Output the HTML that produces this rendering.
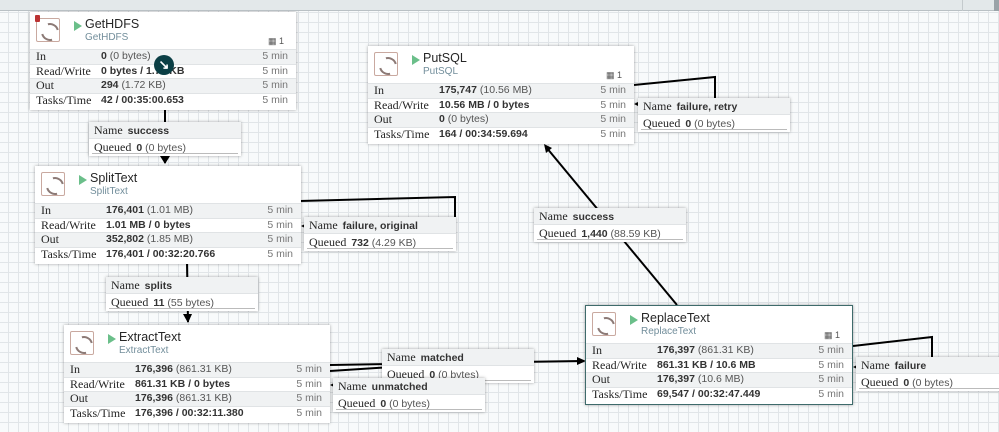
<!DOCTYPE html>
<html><head><meta charset="utf-8"><style>
*{margin:0;padding:0;box-sizing:border-box}
body{width:999px;height:432px;overflow:hidden;position:relative;background-color:#f8fafb;
background-image:linear-gradient(#e1e5e8 1px,transparent 1px),linear-gradient(90deg,#e1e5e8 1px,transparent 1px);
background-size:10px 10px;background-position:0 2px,8px 0;font-family:"Liberation Sans",sans-serif;color:#262626}
.bar{position:absolute;left:0;top:0;width:999px;height:11px;background:#e3e8ea;border-bottom:1px solid #b9c0c4;z-index:5}
.p{position:absolute;width:266px;height:98px;background:#fff;box-shadow:0 0 3px rgba(0,0,0,.35);z-index:3}
.ic{position:absolute;left:6px;top:6px;width:24px;height:24px;border:1px solid #c9a9a0;border-radius:2px}
.ic:after{content:"";position:absolute;left:4px;top:4px;width:14px;height:14px;border:2px solid #8c7a76;border-radius:50%;border-left-color:transparent;border-right-color:transparent;transform:rotate(30deg)}
.tri{position:absolute;left:44px;top:9px;width:0;height:0;border-left:8px solid #6bbf8a;border-top:5px solid transparent;border-bottom:5px solid transparent}
.nm{position:absolute;left:55px;top:5px;font-size:12.5px;color:#262626}
.ty{position:absolute;left:55px;top:20px;font-size:10px;color:#728e9b}
.th{position:absolute;right:12px;top:24px;font-size:9px;color:#555}
.st{position:absolute;left:0;top:37px;width:100%}
.r{position:relative;height:14.5px;border-top:1px solid #e0e3e5;font-size:10.5px;line-height:13px}
.r:nth-child(odd){background:#f0f2f3}
.r b{position:absolute;left:6px;font-family:"Liberation Serif",serif;font-weight:normal;font-size:12px;color:#262626}
.r i{position:absolute;left:71px;font-style:normal;font-weight:bold;color:#333}
.r i span{font-weight:normal;color:#555}
.r u{position:absolute;right:8px;text-decoration:none;color:#777}
.l{position:absolute;width:152px;height:34px;background:#fff;box-shadow:0 0 3px rgba(0,0,0,.35);z-index:4;font-size:10.5px}
.l div{height:17px;line-height:16px;padding-left:5px}
.l div:first-child{background:#f0f2f3;border-bottom:1px solid #e0e3e5}
.l s{text-decoration:none;font-family:"Liberation Serif",serif;font-size:12px;color:#262626;margin-right:5px}
.l b{color:#333}
.l span{color:#555}
.l:after{content:"";position:absolute;left:3px;right:3px;bottom:2px;height:1px;background:#bbb}
svg{position:absolute;left:0;top:0;z-index:2}
</style></head><body>
<div class="bar"><div style="position:absolute;left:962px;top:0;width:1px;height:11px;background:#c4cacd"></div><div style="position:absolute;left:994px;top:0;width:5px;height:11px;background:#9aa3a8"></div></div>
<svg width="999" height="432"><g stroke="#000" stroke-width="2" fill="none">
<path d="M165 110V163"/><path d="M300 201L455 197V217"/><path d="M187 263L188 322"/>
<path d="M330 365L582 361"/><path d="M330 371L408 366V378"/><path d="M677 305L546 147"/>
<path d="M634 85L715 77V98"/><path d="M853 346L932 337V357"/></g>
<g fill="#000"><path d="M160 156l5 8l5-8z"/><path d="M183 314l5 9l4-9z"/><path d="M586 361l-9-4v8z"/><path d="M544 144l2 9l6-5z"/>
<path d="M634 104l6-3v6z"/><path d="M853 367l6-3v6z"/><path d="M301 226l6-3v6z"/><path d="M330 385l6-3v6z"/></g></svg>

<div class="p" style="left:30px;top:12px"><div class="ic"></div><div style="position:absolute;left:5px;top:3px;width:5px;height:7px;background:#b33;border-radius:1px"></div><div class="tri"></div><div class="nm">GetHDFS</div><div class="ty">GetHDFS</div><div class="th">▦ 1</div>
<div class="st"><div class="r"><b>In</b><i>0 <span>(0 bytes)</span></i><u>5 min</u></div><div class="r"><b>Read/Write</b><i>0 bytes / 1.72 KB</i><u>5 min</u></div><div class="r"><b>Out</b><i>294 <span>(1.72 KB)</span></i><u>5 min</u></div><div class="r" style="height:16px"><b>Tasks/Time</b><i>42 / 00:35:00.653</i><u>5 min</u></div></div>
<div style="position:absolute;left:124px;top:43px;width:20px;height:20px;border-radius:50%;background:#0b3f45;color:#fff;font-size:13px;line-height:20px;text-align:center;font-weight:bold">↘</div></div>

<div class="p" style="left:368px;top:46px"><div class="ic"></div><div class="tri"></div><div class="nm">PutSQL</div><div class="ty">PutSQL</div><div class="th">▦ 1</div>
<div class="st"><div class="r"><b>In</b><i>175,747 <span>(10.56 MB)</span></i><u>5 min</u></div><div class="r"><b>Read/Write</b><i>10.56 MB / 0 bytes</i><u>5 min</u></div><div class="r"><b>Out</b><i>0 <span>(0 bytes)</span></i><u>5 min</u></div><div class="r" style="height:16px"><b>Tasks/Time</b><i>164 / 00:34:59.694</i><u>5 min</u></div></div></div>

<div class="p" style="left:35px;top:166px"><div class="ic"></div><div class="tri"></div><div class="nm">SplitText</div><div class="ty">SplitText</div>
<div class="st"><div class="r"><b>In</b><i>176,401 <span>(1.01 MB)</span></i><u>5 min</u></div><div class="r"><b>Read/Write</b><i>1.01 MB / 0 bytes</i><u>5 min</u></div><div class="r"><b>Out</b><i>352,802 <span>(1.85 MB)</span></i><u>5 min</u></div><div class="r" style="height:16px"><b>Tasks/Time</b><i>176,401 / 00:32:20.766</i><u>5 min</u></div></div></div>

<div class="p" style="left:64px;top:325px"><div class="ic"></div><div class="tri"></div><div class="nm">ExtractText</div><div class="ty">ExtractText</div>
<div class="st"><div class="r"><b>In</b><i>176,396 <span>(861.31 KB)</span></i><u>5 min</u></div><div class="r"><b>Read/Write</b><i>861.31 KB / 0 bytes</i><u>5 min</u></div><div class="r"><b>Out</b><i>176,396 <span>(861.31 KB)</span></i><u>5 min</u></div><div class="r" style="height:16px"><b>Tasks/Time</b><i>176,396 / 00:32:11.380</i><u>5 min</u></div></div></div>

<div class="p" style="left:585px;top:305px;width:268px;height:100px;border:1px solid #3f6b6b"><div class="ic"></div><div class="tri"></div><div class="nm">ReplaceText</div><div class="ty">ReplaceText</div><div class="th">▦ 1</div>
<div class="st"><div class="r"><b>In</b><i>176,397 <span>(861.31 KB)</span></i><u>5 min</u></div><div class="r"><b>Read/Write</b><i>861.31 KB / 10.6 MB</i><u>5 min</u></div><div class="r"><b>Out</b><i>176,397 <span>(10.6 MB)</span></i><u>5 min</u></div><div class="r" style="height:16px"><b>Tasks/Time</b><i>69,547 / 00:32:47.449</i><u>5 min</u></div></div></div>

<div class="l" style="left:89px;top:122px"><div><s>Name</s><b>success</b></div><div><s>Queued</s><b>0</b> <span>(0 bytes)</span></div></div>
<div class="l" style="left:304px;top:217px"><div><s>Name</s><b>failure, original</b></div><div><s>Queued</s><b>732</b> <span>(4.29 KB)</span></div></div>
<div class="l" style="left:106px;top:277px"><div><s>Name</s><b>splits</b></div><div><s>Queued</s><b>11</b> <span>(55 bytes)</span></div></div>
<div class="l" style="left:534px;top:208px"><div><s>Name</s><b>success</b></div><div><s>Queued</s><b>1,440</b> <span>(88.59 KB)</span></div></div>
<div class="l" style="left:638px;top:98px"><div><s>Name</s><b>failure, retry</b></div><div><s>Queued</s><b>0</b> <span>(0 bytes)</span></div></div>
<div class="l" style="left:382px;top:349px"><div><s>Name</s><b>matched</b></div><div><s>Queued</s><b>0</b> <span>(0 bytes)</span></div></div>
<div class="l" style="left:333px;top:378px"><div><s>Name</s><b>unmatched</b></div><div><s>Queued</s><b>0</b> <span>(0 bytes)</span></div></div>
<div class="l" style="left:856px;top:357px;width:150px"><div><s>Name</s><b>failure</b></div><div><s>Queued</s><b>0</b> <span>(0 bytes)</span></div></div>
</body></html>
